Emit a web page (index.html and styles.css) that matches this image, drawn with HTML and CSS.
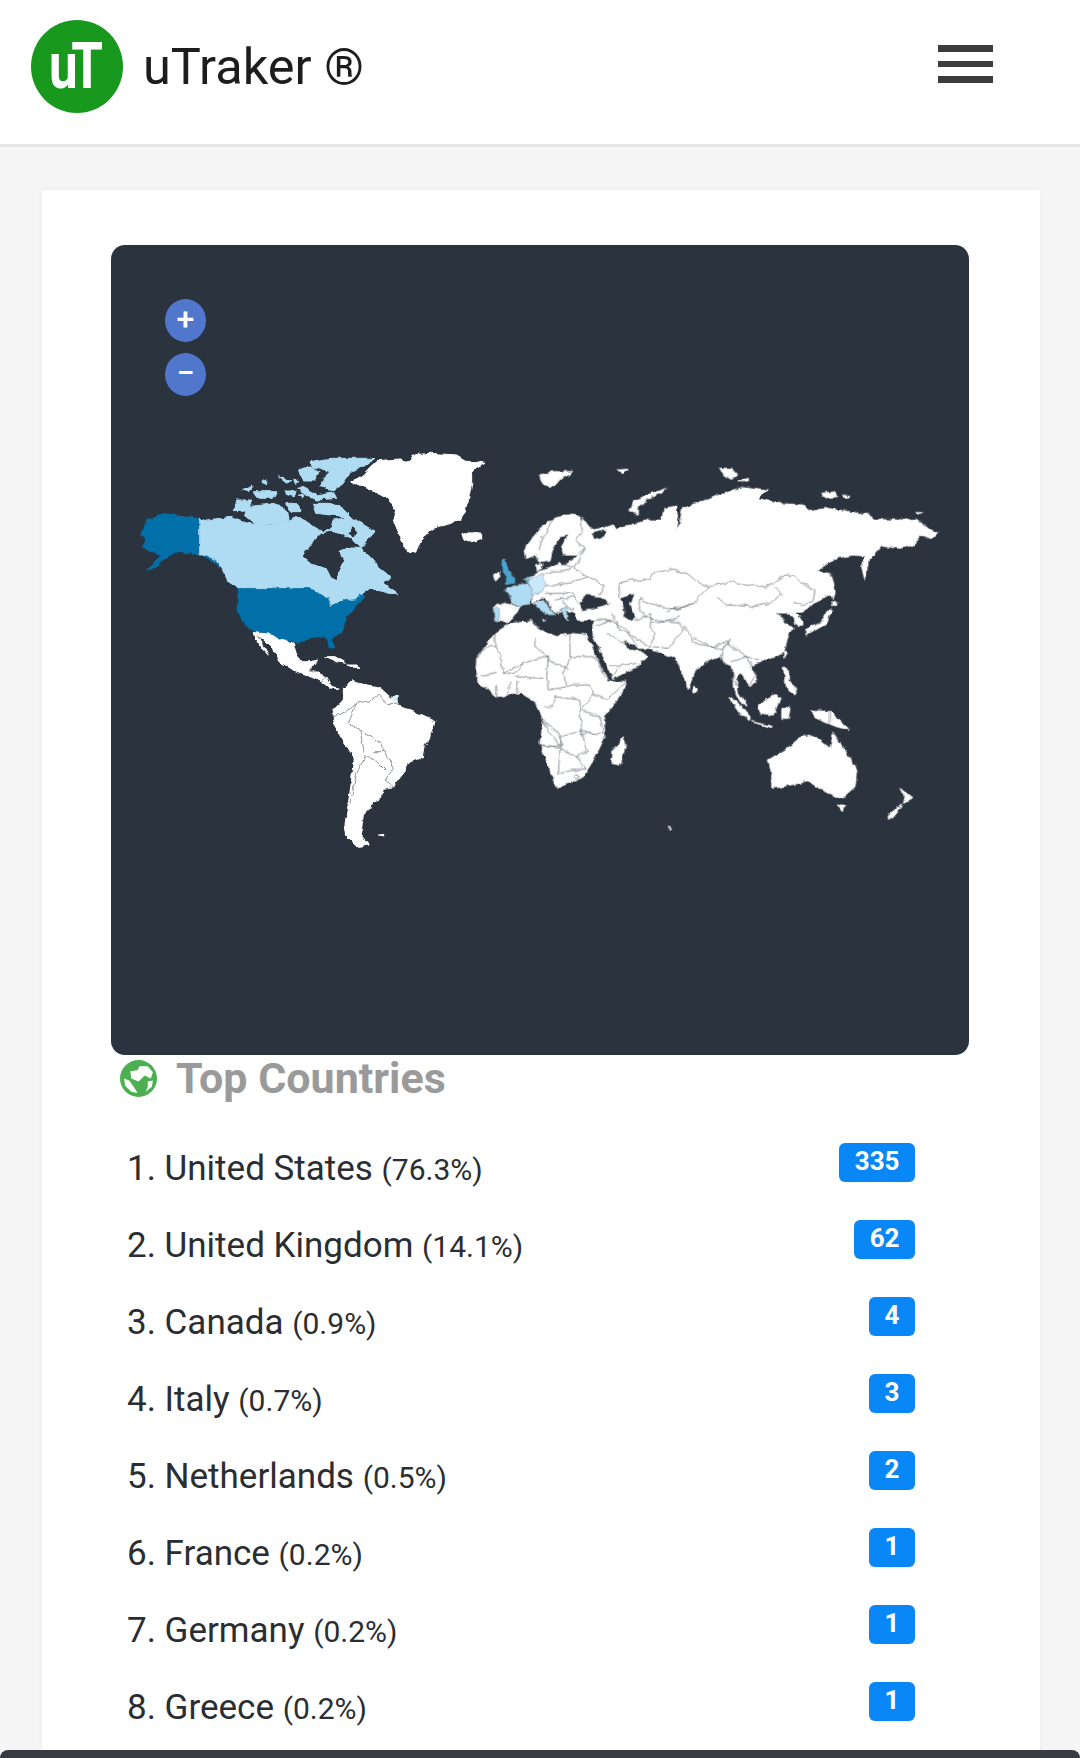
FILE: index.html
```html
<!DOCTYPE html>
<html lang="en">
<head>
    <meta charset="UTF-8">
    <meta name="viewport" content="width=device-width, initial-scale=1.0">
    <title>uTraker</title>
    <link rel="stylesheet" href="styles.css">
</head>
<body>
    <header class="top-bar">
        <div class="logo"><span class="logo-text">uT</span></div>
        <div class="brand">uTraker ®</div>
        <div class="menu-button"><span></span><span></span><span></span></div>
    </header>

    <div class="card">
        <div class="map">
            <div class="zoom-buttons">
                <div class="zoom-button">+</div>
                <div class="zoom-button">−</div>
            </div>
            <svg class="world" viewBox="111 245 858 810">
                <defs>
                    <filter id="rough" x="111" y="245" width="858" height="810" filterUnits="userSpaceOnUse" primitiveUnits="userSpaceOnUse" color-interpolation-filters="sRGB">
                        <feTurbulence type="fractalNoise" baseFrequency=".14" numOctaves="2" seed="4"/>
                        <feDisplacementMap in="SourceGraphic" scale="5" xChannelSelector="R" yChannelSelector="G"/>
                    </filter>
                </defs>
                <!-- Americas, traced in a 3x grid -->
                <g class="rough">
                <g transform="translate(130 440) scale(.33333)">
                    <g class="light">
                        <path d="M207 235L235 243 300 232 335 245 380 255 420 255 470 245 500 232 530 245 560 265 580 275 600 270 610 240 640 235 665 260 650 280 670 290 695 270 730 280 705 310 690 325 720 350 745 380 780 410 760 430 790 450 800 465 760 455 720 445 695 462 680 490 640 480 600 505 595 475 570 460 540 445 325 445 295 425 275 385 240 350 207 342Z"/>
                        <path d="M540 65L600 55 735 55 700 80 660 100 635 135 610 150 570 140 580 115 600 95 570 85 545 80Z"/>
                        <path d="M505 90L540 80 570 95 555 120 520 120Z"/>
                        <path d="M550 190L600 190 640 205 670 235 735 275 710 300 670 265 640 230 600 225 560 220Z"/>
                        <path d="M350 200L400 195 440 190 470 215 475 245 420 252 380 255 345 225Z"/>
                        <path d="M310 212L320 180 365 180 350 210Z"/>
                        <path d="M335 150L370 138 355 155Z"/>
                        <path d="M370 155L440 155 430 175 385 175Z"/>
                        <path d="M465 150L495 150 490 170 470 165Z"/>
                        <path d="M500 145L520 140 560 165 610 155 620 175 560 180 530 165Z"/>
                        <path d="M445 110L485 125 470 130Z"/>
                        <path d="M490 120L510 125 495 130Z"/>
                        <path d="M395 125L410 120 410 133Z"/>
                        <path d="M470 190L505 190 510 215 480 215Z"/>
                        <path d="M505 165L525 165 520 175Z"/>
                    </g>
                    <path class="sea" d="M575 280L540 315 518 345 540 370 590 385 605 415 620 420 630 385 640 360 625 335 650 320 690 325 665 295 640 285 605 275Z"/>
                    <g class="deep">
                        <path d="M207 235L150 228 105 220 75 228 50 240 45 258 28 282 48 295 40 320 55 335 90 345 65 375 48 395 85 378 115 350 145 335 175 340 207 342Z"/>
                        <path d="M207 342L240 350 265 375 270 385 240 358Z"/>
                        <path d="M325 445L540 445 570 460 595 475 600 502 640 482 680 478 690 460 705 470 690 485 665 510 650 540 640 570 605 600 612 625 600 625 590 595 560 590 530 600 500 610 490 605 465 595 445 600 420 580 370 575 340 550 320 510Z"/>
                    </g>
                    <g class="land">
                        <path d="M665 125L700 105 740 65 810 60 840 65 850 45 900 40 980 45 1005 60 1065 70 1040 85 1025 100 1025 130 1015 180 1005 215 995 235 960 250 910 265 880 290 860 340 835 335 815 300 790 240 800 215 770 170 720 150Z"/>
                        <path d="M992 285L1020 275 1055 280 1055 295 1025 305 1000 298Z"/>
                        <path d="M370 578L420 582 445 600 465 597 490 610 498 640 510 665 545 665 560 660 540 690 560 695 590 710 605 740 630 745 600 745 575 725 530 705 490 690 450 665 430 625 390 590Z"/>
                        <path d="M370 578L385 590 415 645 395 625 375 595Z"/>
                        <path d="M585 650L615 650 650 670 620 665Z"/>
                        <path d="M650 675L680 675 690 682 660 682Z"/>
                        <path d="M640 745L665 725 710 735 745 740 780 770 815 800 860 820 915 845 905 880 885 920 880 950 830 970 820 1000 790 1040 760 1045 755 1075 725 1085 720 1105 700 1125 695 1165 690 1185 715 1215 680 1220 650 1190 645 1150 655 1090 665 1020 670 950 610 850 610 810 640 780Z"/>
                        <path d="M745 1185L762 1183 760 1188Z"/>
                    </g>
                    <g class="borders">
                        <path d="M680 790L730 780 745 765 770 790 810 790M680 790L655 850 690 870 720 885 750 910 765 935 790 985 765 1020 790 1040"/>
                        <path d="M610 830L650 815 680 790M690 870L705 950 680 1000 660 1090M705 950L740 965 765 990M730 935L770 935M540 690L560 695M575 725L590 710"/>
                    </g>
                    <path class="pale" d="M785 768L803 768 803 785 790 785Z"/>
                </g>

                <!-- Eurasia, Africa, Oceania -->
                <g transform="translate(460 440) scale(.33333)">
                    <g class="land">
                        <path d="M205 415L235 395 270 385 300 370 310 378 355 345 310 345 305 320 325 285 300 290 280 320 270 360 240 365 225 345 200 355 195 325 240 265 280 235 340 222 370 240 400 270 435 262 460 255 470 265 570 240 605 240 612 205 650 198 652 235 645 275 660 245 668 205 705 195 745 178 780 165 850 140 920 150 895 175 950 190 1030 195 1045 215 1100 205 1230 225 1240 238 1300 240 1370 238 1410 270 1435 280 1415 298 1385 285 1360 315 1320 325 1265 318 1230 350 1180 345 1120 355 1070 395 1110 400 1125 460 1060 490 1040 510 985 520 960 535 1000 565 985 585 970 640 930 655 895 668 870 680 890 720 870 740 845 700 830 710 830 750 860 795 845 790 820 740 820 690 790 660 780 650 740 665 700 700 685 745 655 670 640 650 610 640 575 625 540 625 490 600 510 635 535 630 562 648 530 680 470 710 458 715 430 650 400 590 398 560 405 540 350 540 340 515 320 510 325 545 305 515 285 520 255 475 240 475 220 490 215 460Z"/>
                        <path d="M975 520L1010 520 1030 550 1010 560 1000 530Z"/>
                        <path d="M100 502L130 490 180 500 160 530 140 548 105 540Z"/>
                        <path d="M225 375L245 370 245 385 230 392Z"/>
                        <path d="M100 405L115 395 120 410 105 420Z"/>
                        <path d="M50 655L105 580 150 550 215 545 240 570 290 590 330 580 380 585 412 660 445 722 500 725 480 770 430 830 435 890 400 960 370 1010 290 1045 270 990 240 910 250 845 225 785 185 760 110 770 60 730 48 700Z"/>
                        <path d="M490 890L497 915 480 975 455 970 460 930Z"/>
                        <path d="M805 770L830 785 870 830 870 840 845 825Z"/>
                        <path d="M875 845L940 860 930 862Z"/>
                        <path d="M895 795L945 760 960 775 940 825 905 820Z"/>
                        <path d="M965 810L990 800 985 835 965 835Z"/>
                        <path d="M1050 810L1110 815 1170 870 1130 860 1105 850 1070 835Z"/>
                        <path d="M970 680L985 690 985 725 1010 745 1000 765 980 745Z"/>
                        <path d="M973 635L982 640 975 652Z"/>
                        <path d="M1105 510L1115 510 1100 550 1040 585 1035 570 1085 545Z"/>
                        <path d="M1115 485L1135 490 1115 500Z"/>
                        <path d="M1115 410L1125 450 1120 475 1115 450Z"/>
                        <path d="M1265 318L1225 365 1215 420 1205 380 1220 340Z"/>
                        <path d="M510 215L520 185 560 165 620 145 600 160 550 185 535 205 535 222Z"/>
                        <path d="M235 105L280 95 340 95 330 105 300 115 280 140 255 135Z"/>
                        <path d="M470 90L505 88 490 97Z"/>
                        <path d="M780 85L815 85 830 105 815 118 790 105Z"/>
                        <path d="M830 125L865 115 865 125Z"/>
                        <path d="M1085 160L1125 155 1130 170 1095 172Z"/>
                        <path d="M1145 165L1170 170 1150 172Z"/>
                        <path d="M1365 218L1385 218 1375 222Z"/>
                        <path d="M700 742L708 745 708 760 698 757Z"/>
                        <path d="M925 960L1000 915 1015 895 1050 885 1085 905 1110 925 1120 880 1145 915 1190 990 1185 1040 1145 1075 1105 1060 1075 1040 1040 1025 990 1035 935 1045 935 1000Z"/>
                        <path d="M1135 1095L1155 1095 1150 1115Z"/>
                        <path d="M1320 1045L1358 1075 1330 1090 1335 1075Z"/>
                        <path d="M1325 1095L1310 1120 1285 1138 1285 1125Z"/>
                        <path d="M625 1162L635 1165 627 1167Z"/>
                    </g>
                    <g class="sea">
                        <path d="M480 475L520 462 510 490 525 530 520 545 495 530 490 500Z"/>
                        <path d="M355 490L380 465 420 470 450 490 400 505 370 510Z"/>
                        <path d="M395 280L440 270 425 295 405 300Z"/>
                        <path d="M950 520L985 520 975 545Z"/>
                    </g>
                    <g class="borders">
                        <path d="M475 430L510 420 570 420 580 400 630 388 680 400 720 430 750 440 700 490 640 510M750 440L790 430 820 425 860 435 920 440 965 410 1000 405 1020 425 1065 450 1060 480 1030 495 1000 490M770 470L800 495 880 500 930 490 965 460 940 440"/>
                        <path d="M475 430L480 470M540 475L570 490 620 505 650 510 690 495 700 490M540 475L535 510 580 540 620 545 660 530M620 515L660 500M455 520L480 570 520 590 570 620 585 580 570 560 575 520 525 540"/>
                        <path d="M575 550L620 545 655 545 670 570 625 625 580 620M670 560L690 580 700 610 760 620 790 630 810 600 780 650M700 595L760 620 800 605 820 625 860 650 895 660M780 640L795 670 815 690 830 740M815 665L860 650 885 700 870 735"/>
                        <path d="M405 560L450 540 500 570 535 625M440 580L480 605 525 625M450 680L530 670M455 712L480 680M405 540L460 540"/>
                        <path d="M360 225L370 270 345 300 375 325M280 235L250 290 235 335M355 345L375 325 345 385 385 410 430 435 420 465M300 370L345 385M255 400L290 395 345 385M258 440L320 430 385 410M255 460L340 460 350 490M285 480L340 470M285 520L320 500 340 510M300 470L320 500"/>
                        <path d="M50 655L80 620 105 620 120 640 130 700M105 580L105 620M225 590L225 620 265 645 190 670 130 700M265 645L265 660 325 690M330 580L330 660M330 650L405 650M325 660L310 700 320 735 385 735M405 650L435 710M265 645L260 710 265 750 320 740M130 700L165 700 190 670M165 710L250 715M60 710L110 700M110 735L110 770M150 725L145 765M175 720L170 765"/>
                        <path d="M385 735L400 760 440 780 500 725M400 760L360 810M250 800L280 800 285 770 360 780 360 810 365 870 305 890 300 920 250 845M360 810L420 830 430 880 360 880M245 840L300 880 305 920 240 915M240 915L300 925 295 1005M300 925L350 950 375 990 340 990 300 1000M400 880L365 870 380 935 350 950M1108 815L1108 850"/>
                        <path d="M343 1008L352 1000 358 1010 350 1018Z"/>
                    </g>
                    <g class="light stroked">
                        <path d="M135 450L165 435 205 430 220 460 210 490 185 500 155 490 150 470Z"/>
                        <path class="germany" d="M205 415L250 400 258 440 240 460 215 460Z"/>
                        <path d="M220 490L250 480 285 525 260 525 240 510Z"/>
                        <path d="M245 533L262 538 250 545Z"/>
                        <path d="M300 510L322 505 325 545Z"/>
                        <path d="M100 505L118 505 118 540 103 540Z"/>
                        <path class="netherlands" d="M188 420L208 408 208 428Z"/>
                    </g>
                    <path class="uk" d="M125 365L135 358 145 385 165 415 165 430 130 435 140 410 125 395Z"/>
                </g>
                </g>
            </svg>
        </div>

        <h2 class="section-title">
            <svg class="globe" viewBox="0 0 36 36">
                <circle cx="18" cy="18" r="18" fill="#4caf50"/>
                <path fill="#fff" d="M10 11L17 10 19 6 27 6 32 12 30 18 24 15 18 21 11 18Z"/>
                <path fill="#fff" d="M4 18L9 20 14 27 17 32 11 31 5 25Z"/>
                <path fill="#fff" d="M27 21L32 20 31 26 25 31 27 26Z"/>
            </svg>
            Top Countries
        </h2>

        <ul class="country-list">
            <li class="country"><span class="country-name">1. United States <small>(76.3%)</small></span><span class="badge">335</span></li>
            <li class="country"><span class="country-name">2. United Kingdom <small>(14.1%)</small></span><span class="badge">62</span></li>
            <li class="country"><span class="country-name">3. Canada <small>(0.9%)</small></span><span class="badge">4</span></li>
            <li class="country"><span class="country-name">4. Italy <small>(0.7%)</small></span><span class="badge">3</span></li>
            <li class="country"><span class="country-name">5. Netherlands <small>(0.5%)</small></span><span class="badge">2</span></li>
            <li class="country"><span class="country-name">6. France <small>(0.2%)</small></span><span class="badge">1</span></li>
            <li class="country"><span class="country-name">7. Germany <small>(0.2%)</small></span><span class="badge">1</span></li>
            <li class="country"><span class="country-name">8. Greece <small>(0.2%)</small></span><span class="badge">1</span></li>
        </ul>
    </div>

    <div class="bottom-bar"></div>
</body>
</html>
```

FILE: styles.css
```css
* {
    margin: 0;
    padding: 0;
    box-sizing: border-box;
}

html, body {
    height: 1758px;
    overflow: hidden;
}

body {
    background: #f5f5f5;
    font-family: Roboto, Arial, sans-serif;
    color: #2a2e32;
}

/* Barra superior */
.top-bar {
    display: flex;
    align-items: center;
    height: 147px;
    padding-left: 31px;
    background: #fff;
    border-bottom: 3px solid #e6e6e6;
}

.logo {
    display: flex;
    justify-content: center;
    align-items: center;
    width: 92px;
    height: 93px;
    margin-top: -11px;
    padding-right: 8px;
    border-radius: 50%;
    background: #18981d;
    color: #fff;
    overflow: hidden;
}

.logo-text {
    font-size: 64px;
    font-weight: 700;
    line-height: 64px;
    letter-spacing: -8px;
    transform: scaleX(.8);
}

.brand {
    margin-left: 20px;
    margin-top: -12px;
    font-size: 50.5px;
    color: #1d1d1d;
}

.menu-button {
    display: flex;
    flex-direction: column;
    gap: 9px;
    align-self: flex-start;
    width: 55px;
    margin: 45px 87px 0 auto;
}

.menu-button span {
    height: 6.5px;
    background: #3c3c3c;
}

/* Tarjeta */
.card {
    height: 1600px;
    margin: 43px 40px 0 42px;
    padding: 55px 71px 0 69px;
    background: #fff;
    box-shadow: 0 0 6px rgba(0, 0, 0, .04);
}

.map {
    position: relative;
    height: 810px;
    border-radius: 14px;
    background: #2b343e;
    overflow: hidden;
}

.world {
    display: block;
    width: 100%;
    height: 100%;
}

/* las costas del mapa no son lineas rectas */
.rough {
    filter: url(#rough);
}

/* los trazos engordan un poco las costas */
.land path {
    fill: #fff;
    stroke: #fff;
    stroke-width: 3;
    stroke-linejoin: round;
}

.light path {
    fill: #afdcf3;
    stroke: #afdcf3;
    stroke-width: 3;
    stroke-linejoin: round;
}

.deep path {
    fill: #0270a8;
    stroke: #0270a8;
    stroke-width: 1;
}

.sea, .sea path { fill: #2b343e; }
.uk { fill: #4aa3cc; }
.pale { fill: #d5eef0; }

.light.stroked path {
    stroke: #7d848c;
    stroke-width: 1.5;
}

.light.stroked .germany { fill: #c9e8f9; }
.light.stroked .netherlands { fill: #86c6e6; }

.borders path {
    fill: none;
    stroke: #565d66;
    stroke-width: 2;
    stroke-linejoin: round;
}

.zoom-buttons {
    position: absolute;
    top: 54px;
    left: 54px;
    display: flex;
    flex-direction: column;
    gap: 11px;
}

.zoom-button {
    width: 41px;
    height: 43px;
    border-radius: 50%;
    background: #5177cd;
    color: #fff;
    font-size: 32px;
    font-weight: 500;
    line-height: 41px;
    text-align: center;
}

/* Lista de paises */
.section-title {
    display: flex;
    align-items: center;
    gap: 19px;
    height: 46px;
    padding-left: 9px;
    font-size: 43px;
    font-weight: 700;
    color: #9a9a9a;
}

.globe {
    width: 37px;
    height: 37px;
}

.country-list {
    list-style: none;
    margin-top: 42px;
    padding: 0 54px 0 16px;
}

.country {
    display: flex;
    justify-content: space-between;
    align-items: flex-start;
    height: 77px;
}

.country-name {
    margin-top: 3px;
    font-size: 35px;
    line-height: 46px;
}

.country-name small {
    font-size: 30px;
}

.badge {
    height: 39px;
    padding: 0 15.5px;
    border-radius: 6px;
    background: #0a87f7;
    color: #fff;
    font-size: 26px;
    font-weight: 700;
    line-height: 36px;
}

.bottom-bar {
    position: fixed;
    left: 0;
    right: 0;
    bottom: 0;
    height: 8px;
    border-radius: 14px 14px 0 0;
    background: #3a3b42;
}
```
